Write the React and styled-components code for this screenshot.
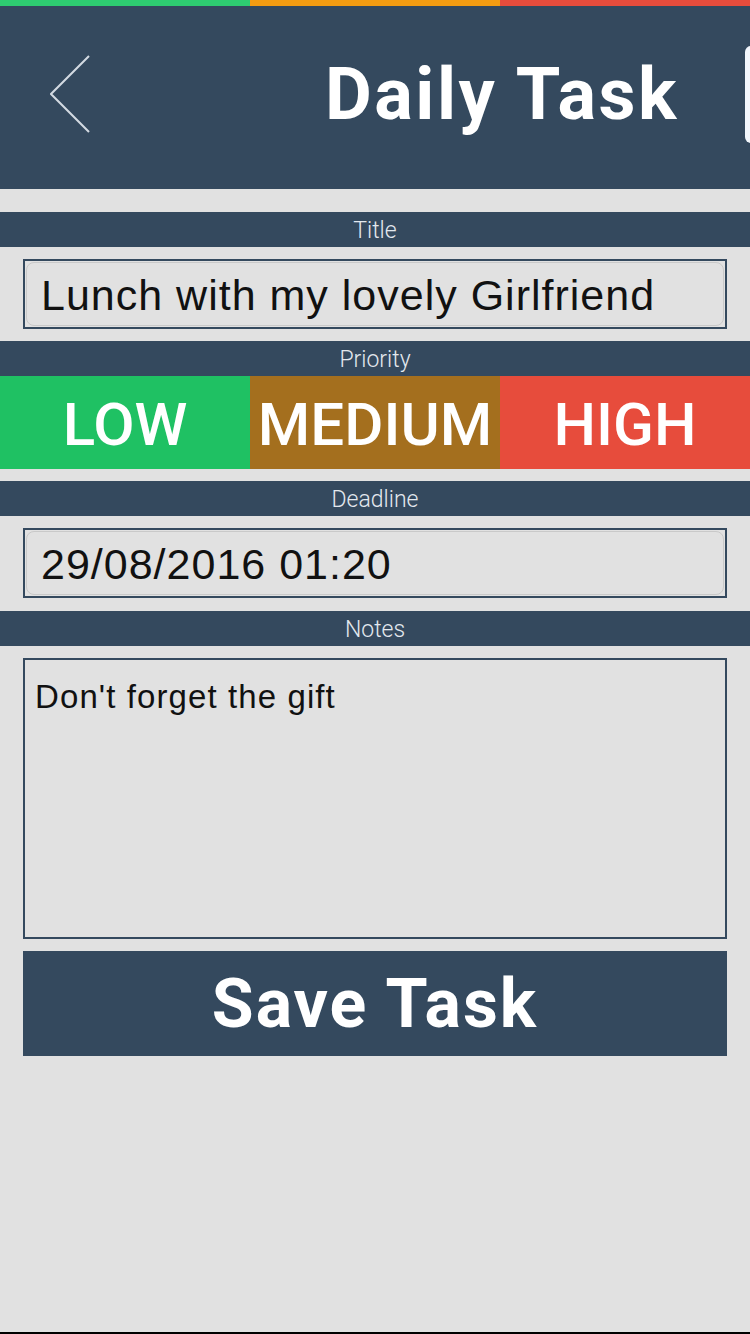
import React from 'react'
import styled, { createGlobalStyle } from 'styled-components'

const GlobalStyle = createGlobalStyle`
  html, body {
    margin: 0;
    padding: 0;
    background: #e1e1e1;
  }
  * { box-sizing: border-box; }
`;

const stripes = ['#2ecc71', '#f39c12', '#e74c3c']

const priorities = [
  { label: 'LOW', color: '#1fc163' },
  { label: 'MEDIUM', color: '#a46f1e' },
  { label: 'HIGH', color: '#e74c3c' }
]

const App = () => {
  return (
    <>
      <GlobalStyle />
      <Page>
        <Stripes>
          {stripes.map((c) => (
            <Stripe key={c} color={c} />
          ))}
        </Stripes>
        <Header>
          <BackButton aria-label="back">
            <svg width="40" height="78" viewBox="0 0 40 78">
              <polyline points="39,1 1,39 39,77" fill="none" stroke="#d3dae2" strokeWidth="2" />
            </svg>
          </BackButton>
          <HeaderTitle>Daily Task</HeaderTitle>
          <EdgeCard />
        </Header>

        <Form>
          <Section>
            <LabelBar>Title</LabelBar>
            <Field>
              <FieldInner>Lunch with my lovely Girlfriend</FieldInner>
            </Field>
          </Section>

          <Section>
            <LabelBar>Priority</LabelBar>
            <PriorityRow>
              {priorities.map((p) => (
                <PriorityButton key={p.label} color={p.color}>
                  {p.label}
                </PriorityButton>
              ))}
            </PriorityRow>
          </Section>

          <Section $gap="13px">
            <LabelBar>Deadline</LabelBar>
            <Field>
              <FieldInner>29/08/2016 01:20</FieldInner>
            </Field>
          </Section>

          <Section>
            <LabelBar>Notes</LabelBar>
            <NotesBox>Don't forget the gift</NotesBox>
          </Section>

          <SaveButton>Save Task</SaveButton>
        </Form>
      </Page>
    </>
  )
}

export default App

const Page = styled.div`
  position: relative;
  width: 750px;
  height: 1334px;
  background: #e1e1e1;
  border-bottom: 2px solid #000;
  overflow: hidden;
`;

const Stripes = styled.div`
  display: flex;
  height: 6px;
`;

const Stripe = styled.div`
  flex: 1;
  background: ${(p) => p.color};
`;

const Header = styled.div`
  position: relative;
  height: 183px;
  background: #34495e;
  display: flex;
  align-items: center;
  padding-left: 50px;
`;

const BackButton = styled.div`
  display: flex;
  align-items: center;
  margin-top: -8px;
`;

const HeaderTitle = styled.h1`
  margin: -6px 71px 0 auto;
  font-family: Roboto, "Liberation Sans", sans-serif;
  font-weight: 700;
  font-size: 72px;
  color: #fff;
  letter-spacing: 2.5px;
`;

const EdgeCard = styled.div`
  position: absolute;
  left: 745px;
  top: 40px;
  width: 30px;
  height: 97px;
  background: #f3f7fd;
  border-radius: 6px;
`;

const Form = styled.div`
  display: flex;
  flex-direction: column;
  padding-top: 23px;
`;

const Section = styled.div`
  display: flex;
  flex-direction: column;
  margin-bottom: ${(p) => p.$gap || '12px'};
`;

const LabelBar = styled.div`
  height: 35px;
  background: #34495e;
  color: #e3e8ee;
  font-family: Roboto, "Liberation Sans", sans-serif;
  font-weight: 300;
  font-size: 23px;
  line-height: 37px;
  text-align: center;
  margin-bottom: 12px;
`;

const Field = styled.div`
  margin: 0 23px;
  height: 70px;
  border: 2px solid #34495e;
  padding: 1px;
`;

const FieldInner = styled.div`
  height: 100%;
  border: 1px solid #c9c9c9;
  border-radius: 8px;
  padding-left: 14px;
  display: flex;
  align-items: center;
  font-family: "Liberation Sans", Arial, sans-serif;
  font-size: 43px;
  letter-spacing: 1px;
  color: #111;
  padding-top: 2px;
`;

const PriorityRow = styled.div`
  display: flex;
  height: 93px;
  margin-top: -12px;
`;

const PriorityButton = styled.div`
  flex: 1;
  background: ${(p) => p.color};
  color: #fff;
  display: flex;
  align-items: center;
  justify-content: center;
  font-family: Roboto, "Liberation Sans", sans-serif;
  font-weight: 500;
  font-size: 60px;
  padding-top: 4px;
`;

const NotesBox = styled.div`
  margin: 0 23px;
  height: 281px;
  border: 2px solid #34495e;
  padding: 18px 10px;
  font-family: "Liberation Sans", Arial, sans-serif;
  font-size: 33px;
  letter-spacing: 1.1px;
  color: #111;
`;

const SaveButton = styled.button`
  margin: 0 23px;
  height: 105px;
  border: none;
  background: #34495e;
  color: #fff;
  font-family: Roboto, "Liberation Sans", sans-serif;
  font-weight: 700;
  font-size: 68px;
  letter-spacing: 2px;
  padding: 0;
`;
